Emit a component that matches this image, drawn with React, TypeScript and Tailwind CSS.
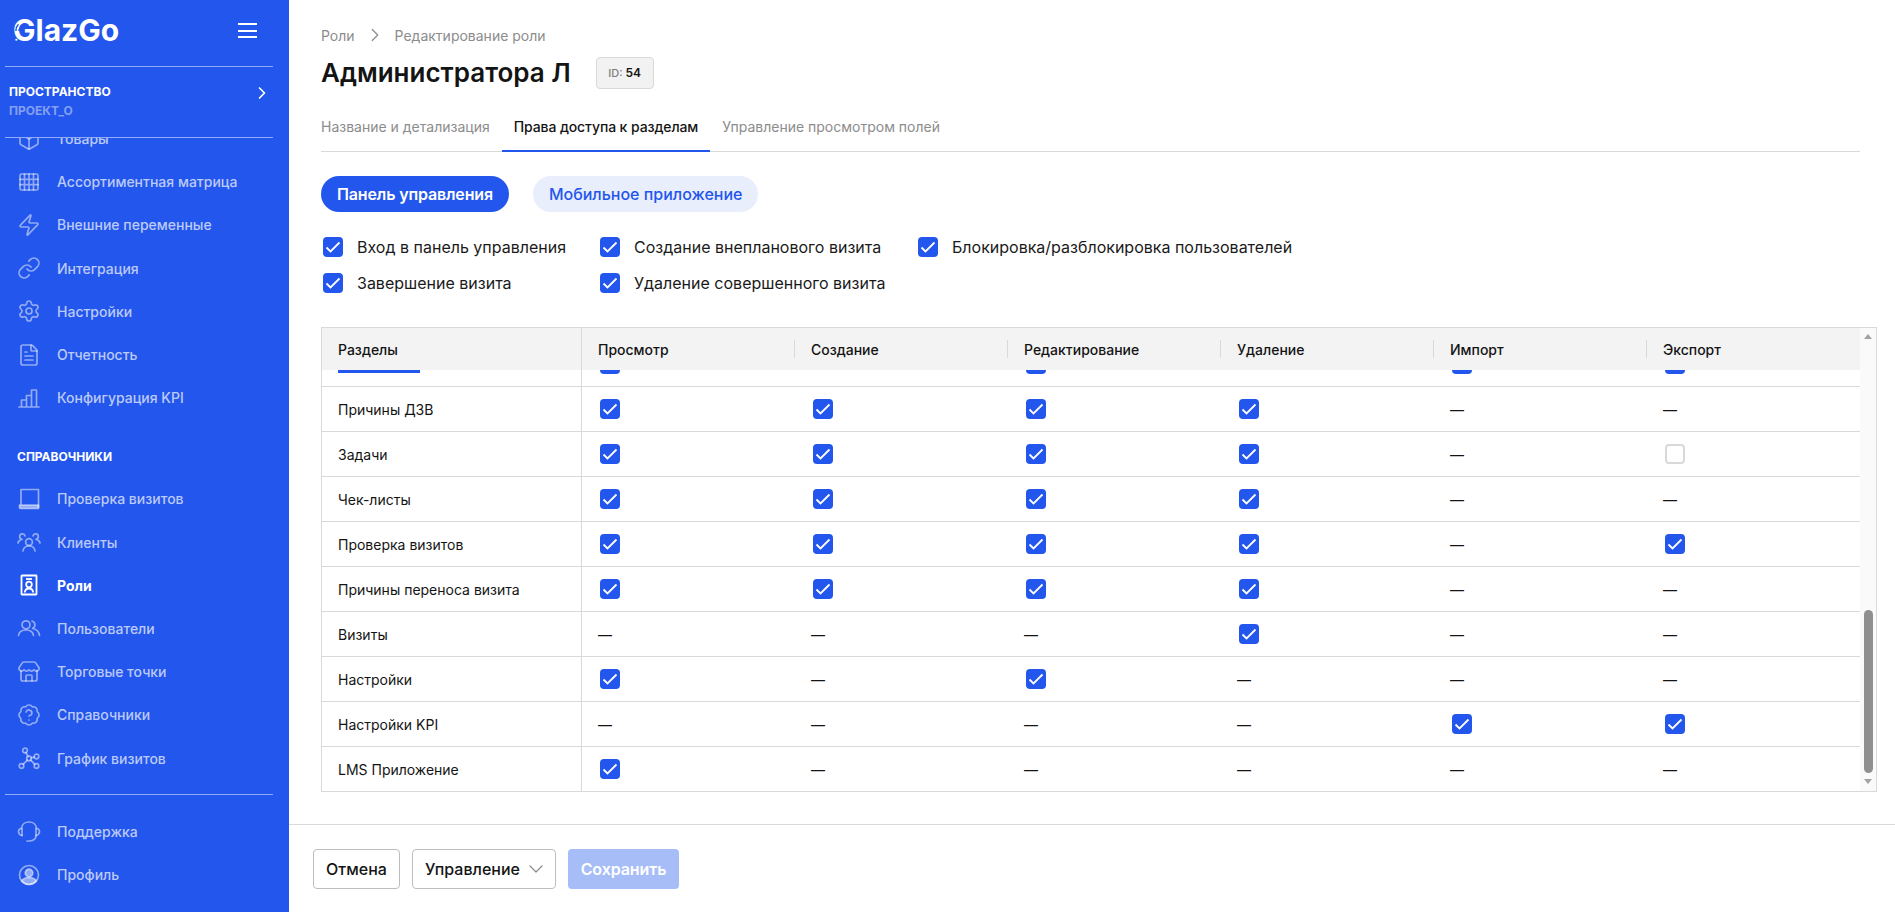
import React from "react";
import {
  Box,
  Zap,
  Link,
  Settings,
  FileText,
  Store,
  BadgeQuestionMark,
  ChevronRight,
  ChevronDown,
} from "lucide-react";

const iconCls = "w-[24px] h-[24px] text-white/50";

const svgProps = {
  viewBox: "0 0 24 24",
  fill: "none",
  stroke: "currentColor",
  strokeWidth: 1.7,
  strokeLinecap: "round" as const,
  strokeLinejoin: "round" as const,
  className: iconCls,
};

const GridIcon = () => (
  <svg {...svgProps}>
    <rect x="3" y="4" width="18" height="16" rx="1.500" />
    <path d="M7.500 4v16M12 4v16M16.500 4v16M3 9.300h18M3 14.700h18" />
  </svg>
);
const ChartIcon = () => (
  <svg {...svgProps}>
    <path d="M2 21h20M4.500 21v-7h5v7M9.500 21V9.500h5V21M14.500 21V4h5v17" />
  </svg>
);
const LaptopIcon = () => (
  <svg {...svgProps}>
    <path d="M4 17V2.500h17.500V20" />
    <path d="M2.500 18h19v3.500H3.500a1 1 0 0 1-1-1z" fill="currentColor" />
  </svg>
);
const ClientsIcon = () => (
  <svg {...svgProps}>
    <circle cx="12" cy="12" r="3.400" />
    <path d="M6 21c.4-3.200 2.900-5 6-5s5.600 1.800 6 5" />
    <path d="M8 6a2.700 2.700 0 1 0-3 3.300C2.800 9.900 1.300 11.300 1 13M16 6a2.700 2.700 0 1 1 3 3.300c2.200.6 3.700 2 4 3.700" />
  </svg>
);
const RoleIcon = () => (
  <svg viewBox="0 0 24 24" fill="none" stroke="currentColor" strokeWidth={1.800} className="w-[24px] h-[24px] text-white">
    <rect x="4.500" y="2.500" width="15" height="19" rx="0.500" />
    <path d="M9 6h6" />
    <circle cx="12" cy="11.500" r="2.800" />
    <path d="M7.800 19.500c.2-2.500 2-4 4.200-4s4 1.500 4.200 4" />
  </svg>
);
const UsersIcon = () => (
  <svg {...svgProps}>
    <circle cx="9" cy="8.800" r="4" />
    <path d="M1.500 19.500c.5-3.500 3.500-5.500 7.500-5.500s7 2 7.500 5.500" />
    <path d="M15 5a4 4 0 0 1 .5 7.500c3.700.6 6.500 3.200 7 7" />
  </svg>
);
const GraphIcon = () => (
  <svg {...svgProps}>
    <circle cx="8" cy="4.500" r="2.300" />
    <circle cx="12" cy="12.500" r="2.300" />
    <circle cx="19.500" cy="10.500" r="2.300" />
    <circle cx="4.500" cy="20" r="2.300" />
    <circle cx="19.500" cy="20" r="2.300" />
    <path d="M9 6.600l2 3.800M14.200 11.900l3.100-.8M10.300 14.100l-4.200 4.300M13.700 14.100l4.100 4.300" />
  </svg>
);
const SupportIcon = () => (
  <svg {...svgProps}>
    <path d="M5 15.500C3 15 1.500 13.500 1.500 11.500c0-1.500 1-2.800 3-3.300C5 4.500 8 2 12 2s7 2.500 7.500 6.200c2 .5 3 1.800 3 3.300 0 2-1.500 3.500-3.500 4" />
    <path d="M5 8.500v7M19 8.500v7c0 3-2.500 5.300-6.500 5.500H10" />
  </svg>
);
const ProfileIcon = () => (
  <svg {...svgProps}>
    <circle cx="12" cy="12" r="9.500" />
    <circle cx="12" cy="10" r="3.800" fill="currentColor" />
    <path d="M4.500 18c1.500-2.500 4-3.500 7.500-3.500s6 1 7.500 3.500c-2 2.200-4.500 3.500-7.500 3.500S6.500 20.200 4.500 18z" fill="currentColor" />
  </svg>
);

const lucideProps = { className: iconCls, strokeWidth: 1.7 };

function NavItem({ icon, label, active }: { icon: React.ReactNode; label: string; active?: boolean }) {
  return (
    <div className="flex h-[43.2px] shrink-0 items-center gap-[16px] pl-[17px]">
      <span className="flex w-[24px] h-[24px] items-center justify-center">{icon}</span>
      <span className={active ? "text-[14px] font-bold text-white" : "text-[14px] font-medium text-white/70"}>{label}</span>
    </div>
  );
}

function Sidebar() {
  return (
    <aside className="flex h-full w-[289px] shrink-0 flex-col bg-[#2356ec]">
      <div className="flex h-[66px] shrink-0 items-start pl-[13px] pr-[32px] pt-[12px]">
        <div className="relative flex-1">
          <span className="text-[30px] leading-[36px] font-bold text-white">GlazGo</span>
          <svg viewBox="0 0 24 28" className="absolute left-[0px] top-[7px] h-[24px] w-[20px]" fill="none">
            <path d="M7 14a7 7 0 0 1 8-6.500M3.500 14a11 11 0 0 1 3-8" stroke="#2356ec" strokeWidth="1.800" />
            <circle cx="4" cy="24.500" r="1.300" fill="#ffffff" />
          </svg>
        </div>
        <div className="mt-[11px] flex w-[19px] flex-col gap-[4.500px]">
          <span className="h-[2px] bg-white" />
          <span className="h-[2px] bg-white" />
          <span className="h-[2px] bg-white" />
        </div>
      </div>
      <div className="ml-[5px] flex h-[72px] w-[268px] shrink-0 items-start justify-between border-y border-white/50 pl-[4px] pr-[1px] pt-[15px]">
        <div className="flex flex-col">
          <span className="text-[12px] leading-[19px] font-bold text-white">ПРОСТРАНСТВО</span>
          <span className="text-[12px] leading-[19px] font-bold text-white/45">ПРОЕКТ_О</span>
        </div>
        <ChevronRight className="mt-[1px] h-[20px] w-[20px] text-white" strokeWidth={2} />
      </div>
      <div className="flex h-[656px] shrink-0 flex-col overflow-hidden">
        <div className="-mt-[21px] flex flex-col">
          <NavItem icon={<Box {...lucideProps} />} label="Товары" />
          <NavItem icon={<GridIcon />} label="Ассортиментная матрица" />
          <NavItem icon={<Zap {...lucideProps} />} label="Внешние переменные" />
          <NavItem icon={<Link {...lucideProps} />} label="Интеграция" />
          <NavItem icon={<Settings {...lucideProps} />} label="Настройки" />
          <NavItem icon={<FileText {...lucideProps} />} label="Отчетность" />
          <NavItem icon={<ChartIcon />} label="Конфигурация KPI" />
          <div className="flex h-[16px] items-center pl-[17px] mt-[30px] mb-[12px] text-[12px] font-bold text-white">СПРАВОЧНИКИ</div>
          <NavItem icon={<LaptopIcon />} label="Проверка визитов" />
          <NavItem icon={<ClientsIcon />} label="Клиенты" />
          <NavItem icon={<RoleIcon />} label="Роли" active />
          <NavItem icon={<UsersIcon />} label="Пользователи" />
          <NavItem icon={<Store {...lucideProps} />} label="Торговые точки" />
          <NavItem icon={<BadgeQuestionMark {...lucideProps} />} label="Справочники" />
          <NavItem icon={<GraphIcon />} label="График визитов" />
        </div>
      </div>
      <div className="ml-[5px] w-[268px] border-t border-white/50" />
      <div className="flex flex-col pt-[15px]">
        <NavItem icon={<SupportIcon />} label="Поддержка" />
        <NavItem icon={<ProfileIcon />} label="Профиль" />
      </div>
    </aside>
  );
}

function Check({ className = "" }: { className?: string }) {
  return (
    <span className={"flex h-[20px] w-[20px] shrink-0 items-center justify-center rounded-[4px] bg-[#2356ec] " + className}>
      <svg viewBox="0 0 20 20" className="h-[20px] w-[20px]" fill="none" stroke="#ffffff" strokeWidth="1.800">
        <path d="M3.500 10.500l4 4 9-9" />
      </svg>
    </span>
  );
}

function Box2() {
  return <span className="block h-[20px] w-[20px] rounded-[4px] border-2 border-[#d9d9d9] bg-white" />;
}

type Cell = "c" | "-" | "o";

const rows: { name: string; cells: Cell[] }[] = [
  { name: "Причины ДЗВ", cells: ["c", "c", "c", "c", "-", "-"] },
  { name: "Задачи", cells: ["c", "c", "c", "c", "-", "o"] },
  { name: "Чек-листы", cells: ["c", "c", "c", "c", "-", "-"] },
  { name: "Проверка визитов", cells: ["c", "c", "c", "c", "-", "c"] },
  { name: "Причины переноса визита", cells: ["c", "c", "c", "c", "-", "-"] },
  { name: "Визиты", cells: ["-", "-", "-", "c", "-", "-"] },
  { name: "Настройки", cells: ["c", "-", "c", "-", "-", "-"] },
  { name: "Настройки KPI", cells: ["-", "-", "-", "-", "c", "c"] },
  { name: "LMS Приложение", cells: ["c", "-", "-", "-", "-", "-"] },
];

const heads = ["Просмотр", "Создание", "Редактирование", "Удаление", "Импорт", "Экспорт"];
const topRow: boolean[] = [true, false, true, false, true, true];

function Table() {
  return (
    <div className="ml-[32px] mr-[18px] mt-[34px] flex h-[465px] border border-[#d9d9d9]">
      <div className="flex min-w-0 flex-1 flex-col overflow-hidden">
        <div className="grid h-[42px] shrink-0 grid-cols-[260px_repeat(6,1fr)] bg-[#f3f3f3] text-[14px] font-medium text-[#141414]">
          <div className="flex items-center border-r border-[#d9d9d9] pl-[16px]">Разделы</div>
          {heads.map((h, i) => (
            <div key={h} className="flex items-center justify-between pl-[16px]">
              <span>{h}</span>
              {i < 5 && <span className="h-[18px] w-px bg-[#d9d9d9]" />}
            </div>
          ))}
        </div>
        <div className="grid h-[17px] shrink-0 grid-cols-[260px_repeat(6,1fr)] overflow-hidden border-b border-[#d9d9d9]">
          <div className="border-r border-[#d9d9d9] pl-[16px]">
            <div className="h-[3px] w-[82px] bg-[#2356ec]" />
          </div>
          {topRow.map((v, i) => (
            <div key={i} className="pl-[18px]">
              {v && <Check className="-mt-[16px]" />}
            </div>
          ))}
        </div>
        {rows.map((r) => (
          <div key={r.name} className="grid h-[45px] shrink-0 grid-cols-[260px_repeat(6,1fr)] border-b border-[#d9d9d9] last:h-[44px] last:border-b-0 text-[14px] text-[#141414]">
            <div className="flex items-center border-r border-[#d9d9d9] pl-[16px]">{r.name}</div>
            {r.cells.map((c, i) =>
              c === "-" ? (
                <div key={i} className="flex items-center pl-[16px] text-[14px]">—</div>
              ) : (
                <div key={i} className="flex items-center pl-[18px]">
                  {c === "c" ? <Check /> : <Box2 />}
                </div>
              )
            )}
          </div>
        ))}
      </div>
      <div className="flex w-[16px] shrink-0 flex-col items-center bg-[#fafafa]">
        <span className="mt-[6px] h-0 w-0 border-x-[4.500px] border-b-[5px] border-x-transparent border-b-[#a3a3a3]" />
        <span className="mt-[271px] h-[163px] w-[9px] rounded-full bg-[#8f8f8f]" />
        <span className="mt-[6px] h-0 w-0 border-x-[4.500px] border-t-[5px] border-x-transparent border-t-[#a3a3a3]" />
      </div>
    </div>
  );
}

function Option({ label }: { label: string }) {
  return (
    <label className="flex h-[20px] items-center gap-[14px] text-[16px] leading-[20px] text-[#1a1a1a]">
      <Check />
      <span>{label}</span>
    </label>
  );
}

function Main() {
  return (
    <main className="flex h-full min-w-0 flex-1 flex-col">
      <div className="h-[824px] shrink-0">
        <div className="mx-[32px] mt-[25px] flex h-[20px] items-center gap-[9px] text-[14px] text-[#8c8c8c]">
          <span>Роли</span>
          <ChevronRight className="h-[22px] w-[22px] text-[#8c8c8c]" strokeWidth={1.300} />
          <span>Редактирование роли</span>
        </div>
        <div className="mx-[32px] mt-[12px] flex h-[32px] items-center gap-[25px]">
          <h1 className="text-[26px] leading-[32px] font-semibold text-[#141414]">Администратора Л</h1>
          <span className="flex h-[32px] w-[58px] items-center justify-center gap-[3px] rounded-[4px] border border-[#d9d9d9] bg-[#f2f2f2] text-[11px] font-medium text-[#808080]">
            ID: <b className="text-[12px] font-semibold text-[#141414]">54</b>
          </span>
        </div>
        <div className="ml-[32px] mr-[35px] mt-[20px] flex h-[43px] items-start border-b border-[#d9d9d9] text-[14px]">
          <div className="h-[43px] pr-[12px] pt-[10px] leading-[16px] text-[#8c8c8c]">Название и детализация</div>
          <div className="h-[43px] border-b-2 border-[#2356ec] px-[12px] pt-[10px] leading-[16px] font-medium tracking-[-0.1px] text-[#141414]">Права доступа к разделам</div>
          <div className="h-[43px] px-[12px] pt-[10px] leading-[16px] text-[#8c8c8c]">Управление просмотром полей</div>
        </div>
        <div className="mx-[32px] mt-[24px] flex gap-[24px]">
          <button className="flex h-[36px] items-center rounded-full bg-[#2356ec] px-[16px] text-[16px] font-semibold tracking-[-0.15px] text-white">Панель управления</button>
          <button className="flex h-[36px] items-center rounded-full bg-[#e9eefc] px-[16px] text-[16px] font-medium text-[#2356ec]">Мобильное приложение</button>
        </div>
        <div className="mx-[34px] mt-[25px] grid grid-cols-[277px_318px_auto] gap-y-[16px]">
          <Option label="Вход в панель управления" />
          <Option label="Создание внепланового визита" />
          <Option label="Блокировка/разблокировка пользователей" />
          <Option label="Завершение визита" />
          <Option label="Удаление совершенного визита" />
        </div>
        <Table />
      </div>
      <div className="flex h-[88px] shrink-0 items-center gap-[12px] border-t border-[#d9d9d9] px-[24px]">
        <button className="flex h-[40px] w-[87px] items-center justify-center rounded-[4px] border border-[#bdbdbd] text-[16px] font-medium text-[#141414]">Отмена</button>
        <button className="flex h-[40px] w-[144px] items-center gap-[4px] rounded-[4px] border border-[#bdbdbd] pl-[12px] text-[16px] font-medium text-[#141414]">
          Управление
          <ChevronDown className="h-[24px] w-[24px] text-[#8c8c8c]" strokeWidth={1.200} />
        </button>
        <button className="flex h-[40px] w-[111px] items-center justify-center rounded-[4px] bg-[#a7bdf7] text-[16px] font-semibold tracking-[-0.1px] text-white">Сохранить</button>
      </div>
    </main>
  );
}

export default function App() {
  return (
    <div className="flex h-[912px] w-full overflow-hidden bg-white font-['Inter',sans-serif]">
      <Sidebar />
      <Main />
    </div>
  );
}
